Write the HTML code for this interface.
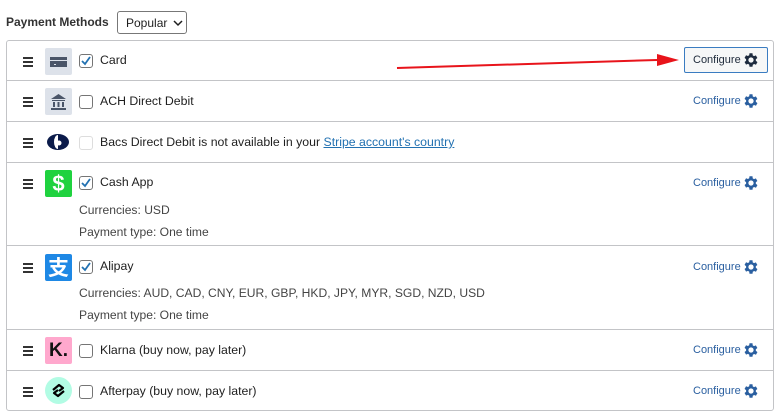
<!DOCTYPE html>
<html><head><style>
*{box-sizing:border-box;margin:0;padding:0}
body{width:779px;height:419px;background:#fff;font-family:"Liberation Sans",Arial,sans-serif;color:#1e1e1e;position:relative;overflow:hidden;font-size:12px}
.title{position:absolute;left:6px;top:15px;font-size:12px;font-weight:bold;color:#333}
.sel{position:absolute;left:117px;top:11px;width:70px;height:23px;border:1px solid #777;border-radius:3px;font-size:12px;padding:4px 0 0 8px}
.box{position:absolute;left:6px;top:40px;width:768px;height:371px;border:1px solid #c3c4c7;border-radius:3px}
.row{position:absolute;left:0;width:766px;border-bottom:1px solid #c3c4c7}
.ham{position:absolute;left:16px;width:10px}
.ham i{display:block;height:2px;background:#333;margin-bottom:2px}
.ic{position:absolute;left:38px;width:27px;height:27px;border-radius:2px}
.cb{position:absolute;left:72px;width:14px;height:14px;border:1px solid #757575;border-radius:3px;background:#fff}
.lbl{position:absolute;left:93px;font-size:12.3px}
.sub{position:absolute;left:72px;font-size:12.1px;color:#444}
.cfg{position:absolute;left:686px;font-size:11px;color:#2a5fa0}
.gear{position:absolute;left:735px;width:18px;height:18px}
</style></head><body>
<div class="title">Payment Methods</div>
<div class="sel">Popular <svg width="10" height="7" style="margin-left:2px" viewBox="0 0 10 7"><path d="M1 1l4 4 4-4" stroke="#1e1e1e" stroke-width="1.5" fill="none"/></svg></div>
<div class="box">
<svg style="position:absolute;left:0;top:0" width="768" height="60"><path d="M390 27 L650 19" stroke="#e8141b" stroke-width="2"/><path d="M650 13 L672 19 L650 25 Z" fill="#e8141b"/></svg>

<div class="row" style="top:0;height:40px">
<div class="ham" style="top:16px"><i></i><i></i><i></i></div>
<div class="ic" style="top:7px;background:#dde2ea"><div style="position:absolute;left:5px;top:9px;width:17px;height:10px;background:#4a5568;border-top:3px solid #4a5568"></div><div style="position:absolute;left:5px;top:12px;width:17px;height:1px;background:#dde2ea"></div><div style="position:absolute;left:9px;top:16px;width:2px;height:1px;background:#dde2ea"></div></div>
<div class="cb" style="top:13px"><svg width="12" height="12" viewBox="0 0 12 12"><path d="M2 6l3 3 5-7" stroke="#2271b1" stroke-width="1.8" fill="none"/></svg></div>
<div class="lbl" style="top:12px">Card</div>
<div style="position:absolute;left:677px;top:6px;width:84px;height:26px;border:1px solid #3a7cc1;background:#f6f7f7;border-radius:2px"></div>
<div class="cfg" style="top:13px;color:#1e2a3a">Configure</div>
<svg class="gear" style="top:10px" viewBox="0 0 24 24"><path fill="#1d2b3e" d="M19.4 13a7.5 7.5 0 000-2l2.1-1.6-2-3.5-2.5 1a7 7 0 00-1.7-1L15 3h-4l-.4 2.7a7 7 0 00-1.7 1l-2.5-1-2 3.5L6.5 11a7.5 7.5 0 000 2l-2.1 1.6 2 3.5 2.5-1a7 7 0 001.7 1L11 21h4l.4-2.7a7 7 0 001.7-1l2.5 1 2-3.5zM13 15.5a3.5 3.5 0 110-7 3.5 3.5 0 010 7z" transform="translate(-1 0)"/></svg>
</div>

<div class="row" style="top:40px;height:41px">
<div class="ham" style="top:16px"><i></i><i></i><i></i></div>
<div class="ic" style="top:7px;background:#dde2ea"><svg width="27" height="27" viewBox="0 0 27 27"><path d="M6 11L13.5 6 21 11Z M7 12h13v1H7z M8 14h2v5H8z M12.5 14h2v5h-2z M17 14h2v5h-2z M6 20h15v2H6z" fill="#4a5568"/></svg></div>
<div class="cb" style="top:14px"></div>
<div class="lbl" style="top:13px">ACH Direct Debit</div>
<div class="cfg" style="top:14px">Configure</div>
<svg class="gear" style="top:11px" viewBox="0 0 24 24"><path fill="#2a5fa0" d="M19.4 13a7.5 7.5 0 000-2l2.1-1.6-2-3.5-2.5 1a7 7 0 00-1.7-1L15 3h-4l-.4 2.7a7 7 0 00-1.7 1l-2.5-1-2 3.5L6.5 11a7.5 7.5 0 000 2l-2.1 1.6 2 3.5 2.5-1a7 7 0 001.7 1L11 21h4l.4-2.7a7 7 0 001.7-1l2.5 1 2-3.5zM13 15.5a3.5 3.5 0 110-7 3.5 3.5 0 010 7z" transform="translate(-1 0)"/></svg>
</div>

<div class="row" style="top:81px;height:41px">
<div class="ham" style="top:16px"><i></i><i></i><i></i></div>
<svg style="position:absolute;left:39px;top:11px" width="24" height="18" viewBox="0 0 24 18"><ellipse cx="12" cy="9" rx="11" ry="8" fill="#0b1b4a"/><path d="M12 2a4 7 0 000 14z" fill="#fff"/><circle cx="13" cy="10" r="2.5" fill="#fff"/></svg>
<div class="cb" style="top:14px;border-color:#ddd"></div>
<div class="lbl" style="top:13px">Bacs Direct Debit is not available in your <span style="color:#2271b1;text-decoration:underline">Stripe account's country</span></div>
</div>

<div class="row" style="top:122px;height:83px">
<div class="ham" style="top:16px"><i></i><i></i><i></i></div>
<div class="ic" style="top:7px;background:#1fd23f;color:#fff;font-weight:bold;font-size:22px;text-align:center;line-height:27px">$</div>
<div class="cb" style="top:13px"><svg width="12" height="12" viewBox="0 0 12 12"><path d="M2 6l3 3 5-7" stroke="#2271b1" stroke-width="1.8" fill="none"/></svg></div>
<div class="lbl" style="top:12px">Cash App</div>
<div class="sub" style="top:40px">Currencies: USD</div>
<div class="sub" style="top:62px">Payment type: One time</div>
<div class="cfg" style="top:14px">Configure</div>
<svg class="gear" style="top:11px" viewBox="0 0 24 24"><path fill="#2a5fa0" d="M19.4 13a7.5 7.5 0 000-2l2.1-1.6-2-3.5-2.5 1a7 7 0 00-1.7-1L15 3h-4l-.4 2.7a7 7 0 00-1.7 1l-2.5-1-2 3.5L6.5 11a7.5 7.5 0 000 2l-2.1 1.6 2 3.5 2.5-1a7 7 0 001.7 1L11 21h4l.4-2.7a7 7 0 001.7-1l2.5 1 2-3.5zM13 15.5a3.5 3.5 0 110-7 3.5 3.5 0 010 7z" transform="translate(-1 0)"/></svg>
</div>

<div class="row" style="top:205px;height:84px">
<div class="ham" style="top:17px"><i></i><i></i><i></i></div>
<div class="ic" style="top:8px;background:#1e88e5;color:#fff;font-size:21px;font-weight:bold;text-align:center;line-height:27px;font-family:'Noto Sans CJK SC',sans-serif">支</div>
<div class="cb" style="top:14px"><svg width="12" height="12" viewBox="0 0 12 12"><path d="M2 6l3 3 5-7" stroke="#2271b1" stroke-width="1.8" fill="none"/></svg></div>
<div class="lbl" style="top:13px">Alipay</div>
<div class="sub" style="top:40px">Currencies: AUD, CAD, CNY, EUR, GBP, HKD, JPY, MYR, SGD, NZD, USD</div>
<div class="sub" style="top:62px">Payment type: One time</div>
<div class="cfg" style="top:15px">Configure</div>
<svg class="gear" style="top:12px" viewBox="0 0 24 24"><path fill="#2a5fa0" d="M19.4 13a7.5 7.5 0 000-2l2.1-1.6-2-3.5-2.5 1a7 7 0 00-1.7-1L15 3h-4l-.4 2.7a7 7 0 00-1.7 1l-2.5-1-2 3.5L6.5 11a7.5 7.5 0 000 2l-2.1 1.6 2 3.5 2.5-1a7 7 0 001.7 1L11 21h4l.4-2.7a7 7 0 001.7-1l2.5 1 2-3.5zM13 15.5a3.5 3.5 0 110-7 3.5 3.5 0 010 7z" transform="translate(-1 0)"/></svg>
</div>

<div class="row" style="top:289px;height:41px">
<div class="ham" style="top:16px"><i></i><i></i><i></i></div>
<div class="ic" style="top:7px;background:#ffa8cd;color:#111;font-weight:bold;font-size:19px;text-align:center;line-height:27px">K.</div>
<div class="cb" style="top:14px"></div>
<div class="lbl" style="top:13px">Klarna (buy now, pay later)</div>
<div class="cfg" style="top:14px">Configure</div>
<svg class="gear" style="top:11px" viewBox="0 0 24 24"><path fill="#2a5fa0" d="M19.4 13a7.5 7.5 0 000-2l2.1-1.6-2-3.5-2.5 1a7 7 0 00-1.7-1L15 3h-4l-.4 2.7a7 7 0 00-1.7 1l-2.5-1-2 3.5L6.5 11a7.5 7.5 0 000 2l-2.1 1.6 2 3.5 2.5-1a7 7 0 001.7 1L11 21h4l.4-2.7a7 7 0 001.7-1l2.5 1 2-3.5zM13 15.5a3.5 3.5 0 110-7 3.5 3.5 0 010 7z" transform="translate(-1 0)"/></svg>
</div>

<div class="row" style="top:330px;height:40px;border-bottom:none">
<div class="ham" style="top:16px"><i></i><i></i><i></i></div>
<svg style="position:absolute;left:38px;top:6px" width="27" height="27" viewBox="0 0 27 27"><circle cx="13.5" cy="13.5" r="13.5" fill="#b2fce4"/><path d="M8 13l6-5 4 3-4 3 M19 14l-6 5-4-3 4-3" stroke="#000" stroke-width="2.2" fill="none" stroke-linejoin="round"/></svg>
<div class="cb" style="top:14px"></div>
<div class="lbl" style="top:13px">Afterpay (buy now, pay later)</div>
<div class="cfg" style="top:14px">Configure</div>
<svg class="gear" style="top:11px" viewBox="0 0 24 24"><path fill="#2a5fa0" d="M19.4 13a7.5 7.5 0 000-2l2.1-1.6-2-3.5-2.5 1a7 7 0 00-1.7-1L15 3h-4l-.4 2.7a7 7 0 00-1.7 1l-2.5-1-2 3.5L6.5 11a7.5 7.5 0 000 2l-2.1 1.6 2 3.5 2.5-1a7 7 0 001.7 1L11 21h4l.4-2.7a7 7 0 001.7-1l2.5 1 2-3.5zM13 15.5a3.5 3.5 0 110-7 3.5 3.5 0 010 7z" transform="translate(-1 0)"/></svg>
</div>
</div>
</body></html>
